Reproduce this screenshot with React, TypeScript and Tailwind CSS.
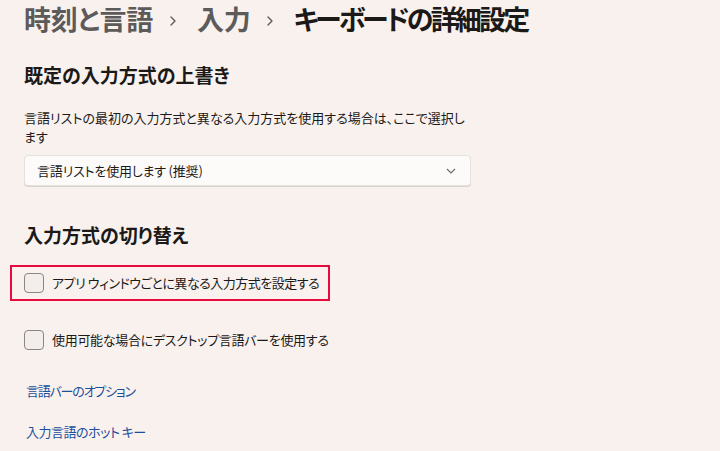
import { ChevronRight } from "lucide-react";

const font = "[font-family:'Noto_Sans_CJK_JP','Noto_Sans',sans-serif] [font-feature-settings:'palt'_1]";

function Checkbox() {
  return (
    <span className="block h-[20px] w-[20px] shrink-0 rounded-[4px] border border-[#8a8683] bg-[#f3eeeb]" />
  );
}

export default function App() {
  return (
    <div className={`h-[451px] w-[720px] overflow-hidden bg-[#f9f1ee] pl-[24px] ${font}`}>
      <div className="flex items-center text-[27px] leading-[38px] font-semibold">
        <span className="tracking-[-0.3px] text-[#5d5b5a]">時刻と言語</span>
        <ChevronRight size={16} strokeWidth={2} className="mt-[3px] mr-[16px] ml-[12px] text-[#5d5b5a]" />
        <span className="tracking-[-0.3px] text-[#5d5b5a]">入力</span>
        <ChevronRight size={16} strokeWidth={2} className="mt-[3px] mr-[15px] ml-[12px] text-[#5d5b5a]" />
        <span className="tracking-[-2.8px] text-[#1b1a19]">キーボードの詳細設定</span>
      </div>

      <h2 className="mt-[23px] text-[19px] leading-[28px] font-semibold text-[#1b1a19]">
        既定の入力方式の上書き
      </h2>

      <p className="mt-[19px] w-[445px] text-[13px] leading-[19px] text-[#1b1a19]">
        言語リストの最初の入力方式と異なる入力方式を使用する場合は、ここで選択します
      </p>

      <button
        type="button"
        className="mt-[9px] flex h-[31px] w-[447px] items-center justify-between rounded-[4px] border border-[#e7e1de] bg-[#fdfbfa] pr-[14px] pl-[12px] text-[13px] tracking-[-0.2px] text-[#1b1a19] shadow-[0_1px_0_#d9d3d0]"
      >
        <span>言語リストを使用します (推奨)</span>
        <svg width="10" height="6" viewBox="0 0 10 6" fill="none" aria-hidden="true">
          <path d="M1 1l4 4 4-4" stroke="#6b6866" strokeWidth="1.1" />
        </svg>
      </button>

      <h2 className="mt-[35px] text-[19px] leading-[28px] font-semibold text-[#1b1a19]">
        入力方式の切り替え
      </h2>

      <div className="mt-[16px] -ml-[14px] flex h-[36px] w-[320px] items-center gap-[8px] border-2 border-[#e8093f] pl-[12px]">
        <Checkbox />
        <span className="whitespace-nowrap text-[13px] tracking-[-0.5px] text-[#1b1a19]">
          アプリ ウィンドウごとに異なる入力方式を設定する
        </span>
      </div>

      <div className="mt-[21px] flex h-[36px] items-center gap-[8px]">
        <Checkbox />
        <span className="text-[13px] tracking-[-0.3px] text-[#1b1a19]">使用可能な場合にデスクトップ言語バーを使用する</span>
      </div>

      <a className="mt-[23px] ml-[2px] block text-[13px] leading-[20px] tracking-[-1.2px] text-[#1a4f9c]">
        言語バーのオプション
      </a>
      <a className="mt-[21px] ml-[2px] block text-[13px] leading-[20px] tracking-[-0.5px] text-[#1a4f9c]">
        入力言語のホット キー
      </a>
    </div>
  );
}
